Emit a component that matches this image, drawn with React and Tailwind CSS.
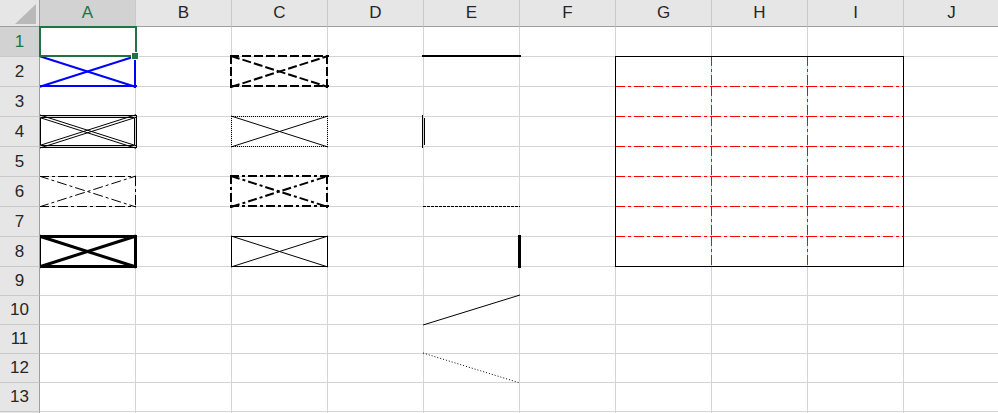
import React from 'react';

const COLS = ['A', 'B', 'C', 'D', 'E', 'F', 'G', 'H', 'I', 'J'];
const ROWS = [1, 2, 3, 4, 5, 6, 7, 8, 9, 10, 11, 12, 13, 14];
const COL_W = 96;
const rowHeight = (r) => (r <= 8 ? 30 : 29);

const BLUE = '#0000ff';
const RED = '#ff0000';

// excel-ish line styles
const LINE = {
  thin: { sw: 1 },
  hair: { sw: 1, dash: '1 1' },
  dotted: { sw: 1, dash: '1 2' },
  dashed: { sw: 1, dash: '3 1' },
  dashDot: { sw: 1, dash: '10 3 3 3' },
  medium: { sw: 2 },
  mediumDashed: { sw: 2, dash: '9 3' },
  mediumDashDot: { sw: 2, dash: '9 3 3 3' },
  thick: { sw: 3 },
  double: { sw: 1, double: true },
};

const box = (kind, color = '#000') => ({
  top: [kind, color],
  right: [kind, color],
  bottom: [kind, color],
  left: [kind, color],
  down: [kind, color],
  up: [kind, color],
});

const BORDERS = {
  A2: box('medium', BLUE),
  A4: box('double'),
  A6: box('dashDot'),
  A8: box('thick'),
  C2: box('mediumDashed'),
  C4: { ...box('hair'), down: ['thin', '#000'], up: ['thin', '#000'] },
  C6: box('mediumDashDot'),
  C8: box('thin'),
  E2: { top: ['medium', '#000'] },
  E4: { left: ['double', '#000'] },
  E6: { bottom: ['dashed', '#000'] },
  E8: { right: ['thick', '#000'] },
  E10: { up: ['thin', '#000'] },
  E12: { down: ['dotted', '#000'] },
};

// G2:I8 outlined in black, inner grid in red dash-dot
['G', 'H', 'I'].forEach((c) => {
  for (let r = 2; r <= 8; r++) {
    const spec = {
      right: c === 'I' ? ['thin', '#000'] : ['dashDot', RED],
      bottom: r === 8 ? ['thin', '#000'] : ['dashDot', RED],
    };
    if (r === 2) spec.top = ['thin', '#000'];
    if (c === 'G') spec.left = ['thin', '#000'];
    BORDERS[c + r] = spec;
  }
});

const edgeLines = (side, [kind, color], w, h) => {
  const st = LINE[kind];
  const horiz = side === 'top' || side === 'bottom';
  const p = side === 'top' || side === 'left' ? 0 : side === 'right' ? w : h;
  const len = horiz ? w + 1 : h + 1;
  const ext = st.sw > 1 ? 1 : 0;
  const segs = st.double
    ? [
        { q: side === 'top' || side === 'left' ? p - 0.5 : p + 1.5, a: -1, b: len + 1 },
        { q: side === 'top' || side === 'left' ? p + 1.5 : p - 0.5, a: 2, b: len - 2 },
      ]
    : [{ q: p + (st.sw === 2 ? 0 : 0.5), a: -ext, b: len + ext }];
  return segs.map((s, i) => (
    <line
      key={side + i}
      x1={horiz ? s.a : s.q}
      y1={horiz ? s.q : s.a}
      x2={horiz ? s.b : s.q}
      y2={horiz ? s.q : s.b}
      stroke={color}
      strokeWidth={st.sw}
      strokeDasharray={st.dash}
    />
  ));
};

const diagLines = (dir, [kind, color], w, h) => {
  const st = LINE[kind];
  const [y1, y2] = dir === 'down' ? [0, h + 1] : [h + 1, 0];
  const offs = st.double ? [-1.3, 1.3] : [0];
  return offs.map((o, i) => (
    <line
      key={dir + i}
      x1={0}
      y1={y1 + o}
      x2={w + 1}
      y2={y2 + o}
      stroke={color}
      strokeWidth={st.sw}
      strokeDasharray={st.dash}
    />
  ));
};

const CellBorders = ({ spec, h }) => (
  <svg
    className="absolute -left-px -top-px z-10 overflow-visible pointer-events-none"
    width={COL_W + 1}
    height={h + 1}
  >
    {['top', 'right', 'bottom', 'left'].map((s) => spec[s] && edgeLines(s, spec[s], COL_W, h))}
    {['down', 'up'].map((d) => spec[d] && diagLines(d, spec[d], COL_W, h))}
  </svg>
);

const Cell = ({ col, row }) => {
  const id = col + row;
  const spec = BORDERS[id];
  return (
    <div className="relative border-r border-b border-[#d4d4d4] bg-white">
      {spec && <CellBorders spec={spec} h={rowHeight(row)} />}
      {id === 'A1' && (
        <>
          <div className="absolute -left-px -top-px z-30 w-[98px] h-[31px] border-2 border-[#217346]" />
          <div className="absolute left-[91px] top-[25px] z-30 w-[8px] h-[8px] border border-white bg-[#217346]" />
        </>
      )}
    </div>
  );
};

export default function App() {
  return (
    <div className="w-[998px] h-[413px] overflow-hidden bg-white font-['Liberation_Sans',Arial,sans-serif] text-[17px] text-[#262626]">
      <div className="grid grid-cols-[40px_repeat(10,96px)] grid-rows-[27px_repeat(8,30px)_repeat(6,29px)] w-[1000px]">
        {/* corner */}
        <div className="relative z-20 bg-[#e6e6e6] border-r border-b border-[#9e9e9e]">
          <svg width="39" height="26" className="block">
            <polygon points="36,4 36,24 15,24" fill="#b9b9b9" />
          </svg>
        </div>
        {COLS.map((c) => (
          <div
            key={c}
            className={`flex items-center justify-center border-b border-b-[#9e9e9e] border-r border-r-[#c9c9c9] ${
              c === 'A' ? 'bg-[#d2d2d2] text-[#217346]' : 'bg-[#e6e6e6]'
            }`}
          >
            {c}
          </div>
        ))}

        {ROWS.map((r) => (
          <React.Fragment key={r}>
            <div
              className={`relative z-20 flex items-center justify-center border-r border-r-[#9e9e9e] border-b border-b-[#c9c9c9] ${
                r === 1 ? 'bg-[#d2d2d2] text-[#217346]' : 'bg-[#e6e6e6]'
              }`}
            >
              {/* row 14 only peeks in by a pixel, no label visible */}
              {r < 14 ? r : null}
            </div>
            {COLS.map((c) => (
              <Cell key={c + r} col={c} row={r} />
            ))}
          </React.Fragment>
        ))}
      </div>
    </div>
  );
}
